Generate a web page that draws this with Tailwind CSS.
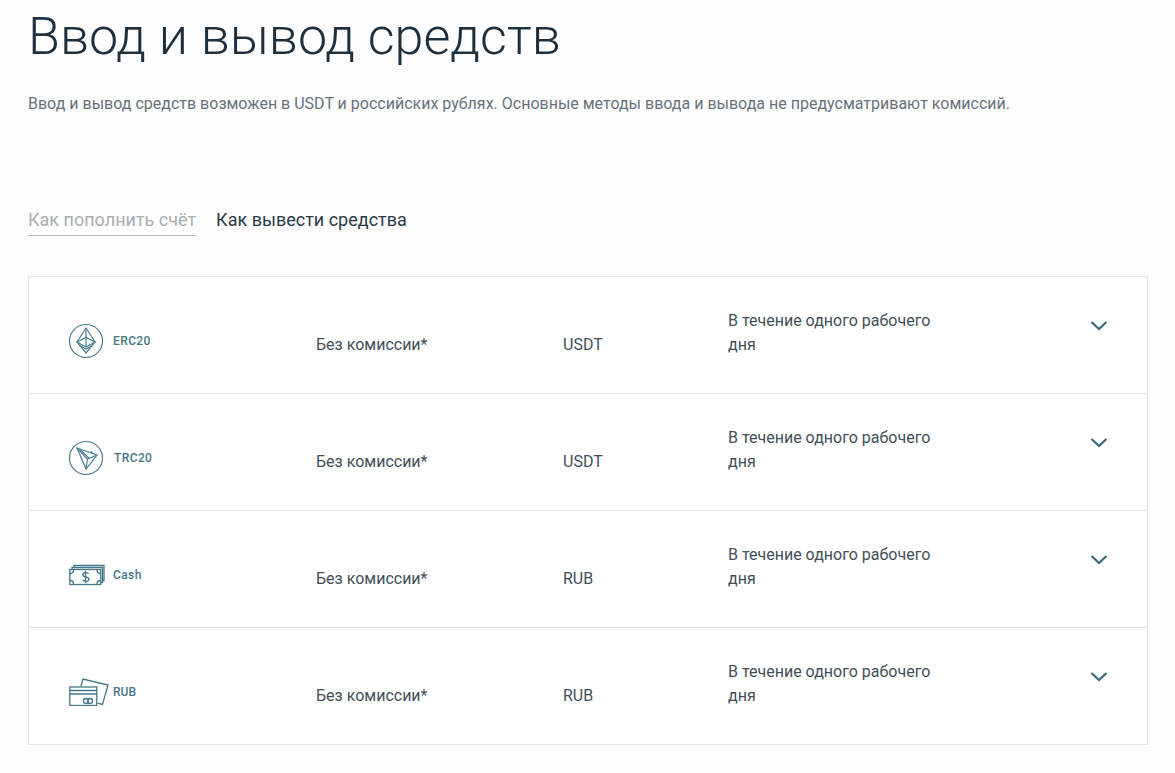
<!DOCTYPE html>
<html lang="ru">
<head>
<meta charset="utf-8">
<script src="https://cdn.jsdelivr.net/npm/@tailwindcss/browser@4"></script>
</head>
<body class="bg-[#fdfdfd] font-['Roboto',sans-serif] text-[#424f5a] overflow-hidden">
<div class="h-[773px] w-[1175px] pl-[28px] pr-[27px]">
  <h1 class="text-[52px] leading-[61px] font-light text-[#1e2f3e] pt-[6px]">Ввод и вывод средств</h1>
  <p class="mt-[25px] text-[16px] leading-[24px] text-[#66737d]">Ввод и вывод средств возможен в USDT и российских рублях. Основные методы ввода и вывода не предусматривают комиссий.</p>
  <div class="mt-[91px] flex gap-[20px] text-[18px] leading-[26px]">
    <span class="border-b border-[#b5b9bc] pb-[2px] text-[#a9aeb2]">Как пополнить счёт</span>
    <span class="text-[#2a3a47]">Как вывести средства</span>
  </div>
  <div class="mt-[40px] border border-[#e2e2e2] bg-white text-[16px] leading-[24px]">

    <div class="grid h-[117px] grid-cols-[287px_247px_165px_362px_1fr] border-b border-[#e2e2e2]">
      <div class="flex pl-[40px] pt-[46px]">
        <svg class="h-[36px] w-[36px]" viewBox="0 0 36 36" fill="none" stroke="#4d7f93" stroke-width="1.200">
          <circle cx="17" cy="18" r="16.500"/>
          <path d="M17 5 8 19l9 11 9-11z"/>
          <path d="M8 19l9-4.500 9 4.500-9 5z"/>
          <path d="M17 5v19M10.500 22.500l6.500 3.500 6.500-3.500"/>
        </svg>
        <span class="ml-[8px] mt-[8px] text-[12px] font-medium leading-[20px] tracking-[0.4px] text-[#467789]">ERC20</span>
      </div>
      <div class="pt-[56px]">Без комиссии*</div>
      <div class="pt-[56px]">USDT</div>
      <div class="w-[230px] pt-[32px]">В течение одного рабочего дня</div>
      <div class="pt-[43px]"><svg class="h-[12px] w-[18px]" viewBox="0 0 18 12" fill="none" stroke="#3b6b80" stroke-width="2.300"><path d="M1.500 2 9 9 16.500 2"/></svg></div>
    </div>

    <div class="grid h-[117px] grid-cols-[287px_247px_165px_362px_1fr] border-b border-[#e2e2e2]">
      <div class="flex pl-[40px] pt-[46px]">
        <svg class="h-[36px] w-[36px]" viewBox="0 0 36 36" fill="none" stroke="#4d7f93" stroke-width="1.200">
          <circle cx="17" cy="18" r="16.500"/>
          <path d="M8 8 28 15 17 29z"/>
          <path d="M8 8 18.500 19 28 15M18.500 19 17 29"/>
          <path d="M11 9.500 20 18M22 11l2 3"/>
        </svg>
        <span class="ml-[9px] mt-[8px] text-[12px] font-medium leading-[20px] tracking-[0.4px] text-[#467789]">TRC20</span>
      </div>
      <div class="pt-[56px]">Без комиссии*</div>
      <div class="pt-[56px]">USDT</div>
      <div class="w-[230px] pt-[32px]">В течение одного рабочего дня</div>
      <div class="pt-[43px]"><svg class="h-[12px] w-[18px]" viewBox="0 0 18 12" fill="none" stroke="#3b6b80" stroke-width="2.300"><path d="M1.500 2 9 9 16.500 2"/></svg></div>
    </div>

    <div class="grid h-[117px] grid-cols-[287px_247px_165px_362px_1fr] border-b border-[#e2e2e2]">
      <div class="flex pl-[40px] pt-[46px]">
        <svg class="mt-[7px] h-[22px] w-[36px]" viewBox="0 0 36 22" fill="none" stroke="#467789" stroke-width="1.300">
          <path d="M5 3V1.500h30v15h-1.500"/>
          <path d="M3 5V3.500h30.500v15H32"/>
          <rect x="0.800" y="5.500" width="31" height="15"/>
          <path d="M1 9.500c2 0 3.500-1.500 3.500-3.800M1 16.500c2 0 3.500 1.500 3.500 3.800M31.500 9.500c-2 0-3.500-1.500-3.500-3.800M31.500 16.500c-2 0-3.500 1.500-3.500 3.800"/>
          <path d="M19.800 9.800c-1-1.800-6-1.800-6 .9 0 3 6.200 1.600 6.200 4.600 0 2.500-5.200 2.500-6.500.6M16.500 6.800v12.400"/>
        </svg>
        <span class="ml-[8px] mt-[8px] text-[12px] font-medium leading-[20px] tracking-[0.4px] text-[#467789]">Cash</span>
      </div>
      <div class="pt-[56px]">Без комиссии*</div>
      <div class="pt-[56px]">RUB</div>
      <div class="w-[230px] pt-[32px]">В течение одного рабочего дня</div>
      <div class="pt-[43px]"><svg class="h-[12px] w-[18px]" viewBox="0 0 18 12" fill="none" stroke="#3b6b80" stroke-width="2.300"><path d="M1.500 2 9 9 16.500 2"/></svg></div>
    </div>

    <div class="grid h-[116px] grid-cols-[287px_247px_165px_362px_1fr]">
      <div class="flex pl-[40px] pt-[46px]">
        <svg class="mt-[4px] h-[28px] w-[40px]" viewBox="0 0 40 28" fill="none" stroke="#467789" stroke-width="1.300">
          <path d="M12 8 14 1l25 6-5.500 19.500-5-1.300"/>
          <rect x="0.800" y="9" width="27" height="18.500"/>
          <path d="M1 12.500h27M1 16h27"/>
          <circle cx="17" cy="23" r="2.500"/>
          <circle cx="21" cy="23" r="2.500"/>
        </svg>
        <span class="ml-[4px] mt-[8px] text-[12px] font-medium leading-[20px] text-[#467789]">RUB</span>
      </div>
      <div class="pt-[56px]">Без комиссии*</div>
      <div class="pt-[56px]">RUB</div>
      <div class="w-[230px] pt-[32px]">В течение одного рабочего дня</div>
      <div class="pt-[43px]"><svg class="h-[12px] w-[18px]" viewBox="0 0 18 12" fill="none" stroke="#3b6b80" stroke-width="2.300"><path d="M1.500 2 9 9 16.500 2"/></svg></div>
    </div>

  </div>
</div>
</body>
</html>
